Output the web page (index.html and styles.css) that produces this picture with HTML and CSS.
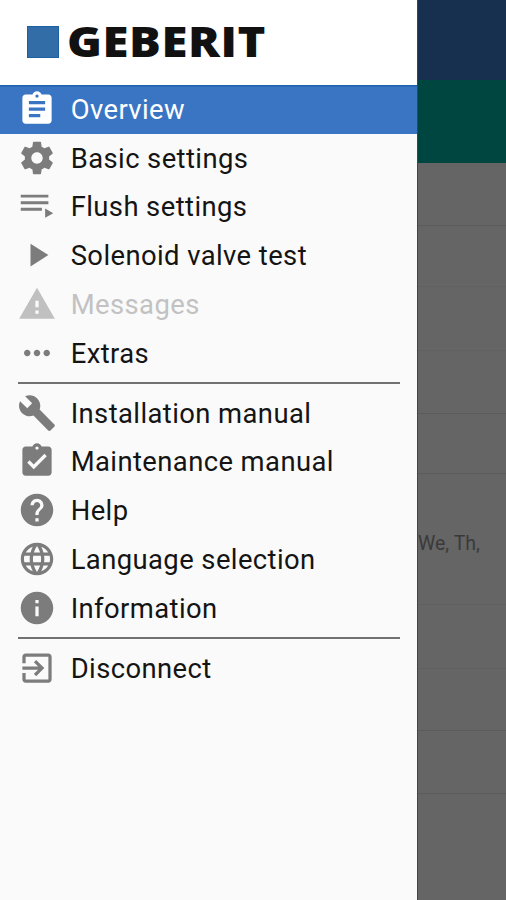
FILE: index.html
```html
<!DOCTYPE html>
<html lang="en">
<head>
<meta charset="utf-8">
<title>Geberit</title>
<link rel="stylesheet" href="styles.css">
</head>
<body>
<div class="screen">
  <aside class="drawer">
    <header class="brand"><span class="brand-square"></span><span class="brand-name">GEBERIT</span></header>
    <nav class="menu">
      <a class="item active"><svg class="icon" viewBox="0 0 24 24"><path d="M19 3h-4.180C14.400 1.840 13.300 1 12 1s-2.400.840-2.820 2H5c-1.100 0-2 .9-2 2v14c0 1.100.9 2 2 2h14c1.100 0 2-.9 2-2V5c0-1.100-.9-2-2-2zm-7 0c.55 0 1 .45 1 1s-.45 1-1 1-1-.45-1-1 .45-1 1-1zm2 14H7v-2h7v2zm3-4H7v-2h10v2zm0-4H7V7h10v2z"/></svg><span class="label">Overview</span></a>
      <a class="item"><svg class="icon" viewBox="0 0 24 24"><path d="M19.430 12.980c.04-.32.07-.64.07-.98s-.03-.66-.07-.98l2.110-1.650c.19-.15.24-.42.12-.64l-2-3.460c-.12-.22-.39-.3-.61-.22l-2.490 1c-.52-.4-1.080-.73-1.690-.98l-.38-2.650C14.460 2.180 14.250 2 14 2h-4c-.25 0-.46.180-.49.420l-.38 2.650c-.61.250-1.170.590-1.690.980l-2.490-1c-.23-.09-.49 0-.61.220l-2 3.460c-.13.220-.07.490.12.640l2.110 1.650c-.04.320-.07.650-.07.980s.03.660.07.980l-2.110 1.650c-.19.150-.24.420-.12.640l2 3.460c.12.220.39.300.61.220l2.490-1c.52.400 1.080.730 1.690.980l.38 2.650c.03.240.24.420.49.420h4c.25 0 .46-.18.49-.42l.38-2.650c.61-.25 1.170-.59 1.690-.98l2.490 1c.23.090.49 0 .61-.22l2-3.460c.12-.22.07-.49-.12-.64l-2.110-1.650zM12 15.500c-1.930 0-3.500-1.570-3.500-3.500s1.570-3.500 3.500-3.500 3.500 1.570 3.500 3.500-1.570 3.500-3.500 3.500z"/></svg><span class="label">Basic settings</span></a>
      <a class="item"><svg class="icon" viewBox="0 0 24 24"><path d="M2 5h17v1.800H2zM2 9.100h17v1.800H2zM2 13.100h13v1.800H2zM17 13.500l5 2.900-5 2.900z"/></svg><span class="label">Flush settings</span></a>
      <a class="item"><svg class="icon" viewBox="0 0 24 24"><path d="M8 5v14l11-7z"/></svg><span class="label">Solenoid valve test</span></a>
      <a class="item disabled"><svg class="icon" viewBox="0 0 24 24"><path d="M1 21h22L12 2 1 21zm12-3h-2v-2h2v2zm0-4h-2v-4h2v4z"/></svg><span class="label">Messages</span></a>
      <a class="item"><svg class="icon" viewBox="0 0 24 24"><path d="M6 10c-1.100 0-2 .9-2 2s.9 2 2 2 2-.9 2-2-.9-2-2-2zm12 0c-1.100 0-2 .9-2 2s.9 2 2 2 2-.9 2-2-.9-2-2-2zm-6 0c-1.100 0-2 .9-2 2s.9 2 2 2 2-.9 2-2-.9-2-2-2z"/></svg><span class="label">Extras</span></a>
      <hr class="divider">
      <a class="item"><svg class="icon" viewBox="0 0 24 24"><path d="M22.700 19l-9.100-9.100c.9-2.300.4-5-1.500-6.900-2-2-5-2.400-7.400-1.300L9 6 6 9 1.600 4.700C.4 7.100.9 10.100 2.900 12.100c1.900 1.900 4.600 2.400 6.900 1.500l9.100 9.100c.4.400 1 .4 1.400 0l2.300-2.300c.5-.4.5-1.100.1-1.400z"/></svg><span class="label">Installation manual</span></a>
      <a class="item"><svg class="icon" viewBox="0 0 24 24"><path d="M19 3h-4.180C14.400 1.840 13.300 1 12 1s-2.400.840-2.820 2H5c-1.100 0-2 .9-2 2v14c0 1.100.9 2 2 2h14c1.100 0 2-.9 2-2V5c0-1.100-.9-2-2-2zm-7 0c.55 0 1 .45 1 1s-.45 1-1 1-1-.45-1-1 .45-1 1-1zm-2 14l-4-4 1.410-1.410L10 14.170l6.590-6.590L18 9l-8 8z"/></svg><span class="label">Maintenance manual</span></a>
      <a class="item"><svg class="icon" viewBox="0 0 24 24"><path d="M12 2C6.480 2 2 6.480 2 12s4.480 10 10 10 10-4.480 10-10S17.520 2 12 2zm1 17h-2v-2h2v2zm2.070-7.750l-.9.920C13.450 12.900 13 13.500 13 15h-2v-.5c0-1.100.45-2.100 1.170-2.830l1.240-1.260c.37-.36.59-.86.59-1.410 0-1.100-.9-2-2-2s-2 .9-2 2H8c0-2.210 1.790-4 4-4s4 1.790 4 4c0 .880-.36 1.680-.93 2.250z"/></svg><span class="label">Help</span></a>
      <a class="item"><svg class="icon" viewBox="0 0 24 24"><path d="M11.990 2C6.470 2 2 6.480 2 12s4.470 10 9.990 10C17.520 22 22 17.520 22 12S17.520 2 11.990 2zm6.930 6h-2.950c-.32-1.250-.78-2.450-1.380-3.560 1.840.630 3.370 1.910 4.330 3.560zM12 4.040c.83 1.200 1.480 2.530 1.910 3.960h-3.820c.43-1.430 1.080-2.760 1.910-3.960zM4.260 14C4.100 13.360 4 12.690 4 12s.1-1.360.26-2h3.380c-.08.660-.14 1.320-.14 2s.06 1.340.14 2H4.260zm.82 2h2.950c.32 1.250.78 2.450 1.380 3.560-1.840-.63-3.370-1.900-4.330-3.560zm2.950-8H5.080c.96-1.660 2.490-2.930 4.330-3.560C8.810 5.550 8.350 6.750 8.030 8zM12 19.960c-.83-1.200-1.480-2.530-1.910-3.960h3.820c-.43 1.430-1.080 2.760-1.910 3.960zM14.340 14H9.660c-.09-.66-.16-1.320-.16-2s.07-1.350.16-2h4.680c.09.650.16 1.320.16 2s-.07 1.340-.16 2zm.25 5.560c.6-1.110 1.060-2.310 1.380-3.560h2.950c-.96 1.650-2.490 2.930-4.330 3.560zM16.360 14c.08-.66.14-1.320.14-2s-.06-1.340-.14-2h3.380c.16.640.26 1.310.26 2s-.1 1.360-.26 2h-3.380z"/></svg><span class="label">Language selection</span></a>
      <a class="item"><svg class="icon" viewBox="0 0 24 24"><path d="M12 2C6.480 2 2 6.480 2 12s4.480 10 10 10 10-4.480 10-10S17.520 2 12 2zm1 15h-2v-6h2v6zm0-8h-2V7h2v2z"/></svg><span class="label">Information</span></a>
      <hr class="divider">
      <a class="item"><svg class="icon" viewBox="0 0 24 24"><path d="M10.090 15.590L11.500 17l5-5-5-5-1.410 1.410L12.670 11H3v2h9.670l-2.580 2.590zM19 3H5c-1.110 0-2 .9-2 2v4h2V5h14v14H5v-4H3v4c0 1.100.89 2 2 2h14c1.100 0 2-.9 2-2V5c0-1.100-.9-2-2-2z"/></svg><span class="label">Disconnect</span></a>
    </nav>
  </aside>
  <main class="page">
    <div class="appbar"></div>
    <div class="banner"></div>
    <div class="row r1"></div>
    <div class="row r2 faint"></div>
    <div class="row r3 faint"></div>
    <div class="row r4"></div>
    <div class="row r5"></div>
    <div class="row r6 faint">We, Th,</div>
    <div class="row r7 faint"></div>
    <div class="row r8"></div>
    <div class="row r9"></div>
  </main>
</div>
</body>
</html>
```

FILE: styles.css
```css
* { box-sizing: border-box; }
body { margin: 0; font-family: Roboto, "Liberation Sans", sans-serif; }
.screen { display: flex; width: 506px; height: 900px; overflow: hidden; }

.drawer { width: 417px; flex: none; background: #fafafa; }
.brand { display: flex; align-items: center; height: 85px; padding: 0 0 1px 27px; background: #fff; }
.brand-square { width: 32px; height: 32px; background: #336da8; border: 1px solid #1c5fa3; }
.brand-name {
  margin-left: 7.500px;
  padding-bottom: 2px;
  font: 800 43px/42px "Open Sans", sans-serif;
  letter-spacing: 0.500px;
  color: #111;
  white-space: nowrap;
  transform: scaleX(1.1);
  transform-origin: left center;
}
.item { display: flex; align-items: center; height: 48.75px; padding-left: 17px; color: #141414; }
.icon { width: 39px; height: 39px; flex: none; fill: #7c7c7c; transform: translate(0.500px, -0.500px); }
.label { margin-left: 14.700px; padding-top: 1px; font-size: 27.400px; line-height: 48px; letter-spacing: 0.420px; white-space: nowrap; }
.active { background: linear-gradient(#1e62ad 1px, #3a75c4 2px); color: #fff; }
.active .icon { fill: #fff; }
.disabled { color: #c2c2c2; }
.disabled .icon { fill: #c0c0c0; }
.divider { height: 2px; margin: 4.500px 17.500px 4.700px; border: 0; background: #717171; }

.page { flex: 1; background: #656565; border-left: 1px solid #444; overflow: hidden; }
.appbar { height: 80px; background: #18304f; }
.banner { height: 83px; background: #004640; }
.row { border-bottom: 1px solid #5b5b5b; color: #3a3a3a; font-size: 19.500px; white-space: nowrap; }
.faint { border-bottom-color: #606060; }
.r1 { height: 63px; }
.r2 { height: 61px; }
.r3 { height: 64px; }
.r4 { height: 63px; }
.r5 { height: 60px; }
.r6 { height: 131px; line-height: 140px; }
.r7 { height: 64px; }
.r8 { height: 62px; }
.r9 { height: 63px; }
```
